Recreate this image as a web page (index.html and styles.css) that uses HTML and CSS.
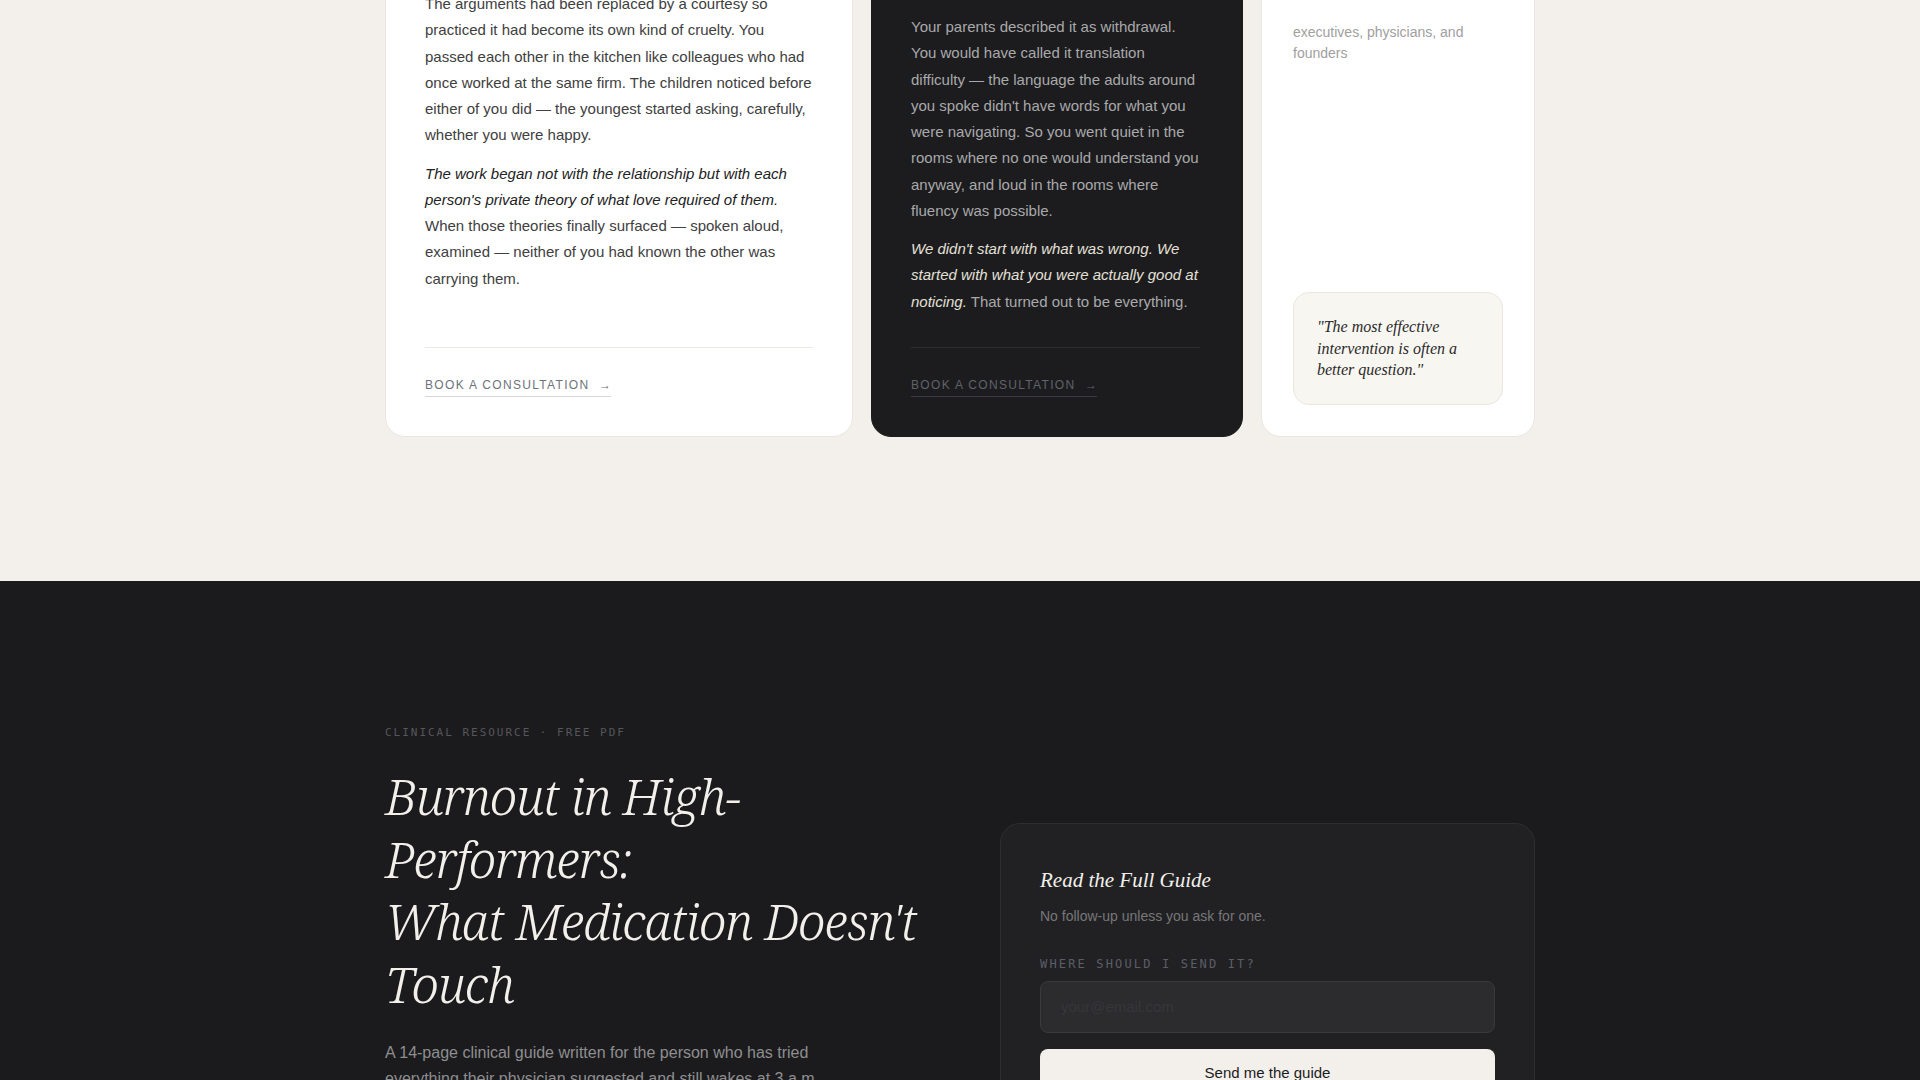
FILE: index.html
```html
<!DOCTYPE html>
<html lang="en">
<head>
<meta charset="utf-8">
<title>Practice — Services and Clinical Guide</title>
<link rel="stylesheet" href="styles.css">
</head>
<body>
<main class="page">
  <section class="services">
    <div class="container">
      <div class="service-grid">
        <article class="card card-a">
          <div class="card-body">
            <p class="card-tag">Couples · 16 sessions</p>
            <h3 class="card-title">The Courteous Marriage</h3>
            <p class="card-text">The arguments had been replaced by a courtesy so practiced it had become its own kind of cruelty. You passed each other in the kitchen like colleagues who had once worked at the same firm. The children noticed before either of you did — the youngest started asking, carefully, whether you were happy.</p>
            <p class="card-text"><em>The work began not with the relationship but with each person's private theory of what love required of them.</em> When those theories finally surfaced — spoken aloud, examined — neither of you had known the other was carrying them.</p>
          </div>
          <div class="card-foot">
            <a class="card-link" href="#consult">Book a consultation <span class="arrow">→</span></a>
          </div>
        </article>

        <article class="card card-b">
          <div class="card-body">
            <p class="card-tag">Individual · Adolescents</p>
            <h3 class="card-title">Fluent Everywhere but at Home</h3>
            <p class="card-text">Your parents described it as withdrawal. You would have called it translation difficulty — the language the adults around you spoke didn't have words for what you were navigating. So you went quiet in the rooms where no one would understand you anyway, and loud in the rooms where fluency was possible.</p>
            <p class="card-text"><em>We didn't start with what was wrong. We started with what you were actually good at noticing.</em> That turned out to be everything.</p>
          </div>
          <div class="card-foot">
            <a class="card-link" href="#consult">Book a consultation <span class="arrow">→</span></a>
          </div>
        </article>

        <article class="card card-c">
          <p class="card-tag">Who I work with</p>
          <h3 class="card-title">A place of belonging</h3>
          <p class="card-sub">executives, physicians, and founders</p>
          <blockquote class="quote">"The most effective intervention is often a better question."</blockquote>
        </article>
      </div>
    </div>
  </section>

  <section class="guide">
    <div class="container guide-grid">
      <div class="guide-copy">
        <p class="eyebrow">Clinical resource · Free PDF</p>
        <h2 class="guide-title">Burnout in High-Performers:<br>What Medication Doesn't Touch</h2>
        <p class="lead">A 14-page clinical guide written for the person who has tried everything their physician suggested and still wakes at 3 a.m.</p>
      </div>

      <form class="guide-form" action="#">
        <h3 class="form-title">Read the Full Guide</h3>
        <p class="form-sub">No follow-up unless you ask for one.</p>
        <label class="form-label" for="email">Where should I send it?</label>
        <input class="form-input" id="email" type="email" placeholder="your@email.com">
        <button class="form-button" type="submit">Send me the guide</button>
        <p class="form-note">Delivered as a PDF. Unsubscribe in one click.</p>
      </form>
    </div>
  </section>
</main>
</body>
</html>
```

FILE: styles.css
```css
html, body {
  margin: 0;
  padding: 0;
}

body {
  background: #f3f0eb;
  font-family: "Liberation Sans", Arial, sans-serif;
  color: #2a2a2a;
}

.container {
  max-width: 1150px;
  margin: 0 auto;
}

/* ---------- Services ---------- */
.services {
  margin-top: -150px;
  padding-bottom: 144px;
}

.service-grid {
  display: grid;
  grid-template-columns: 468fr 372fr 274fr;
  gap: 18px;
}

.card {
  display: flex;
  flex-direction: column;
  background: #ffffff;
  border: 1px solid #ebe7e0;
  border-radius: 20px;
  padding: 39px;
}

.card-b {
  background: #1c1c1e;
  border-color: #1c1c1e;
  padding: 39px 42px 39px 39px;
}

.card-c {
  padding: 31px;
}

.card-body {
  flex: 1 0 auto;
  padding-bottom: 32px;
}

.card-tag {
  margin: 0 0 16px;
  font-family: "DejaVu Sans Mono", "Liberation Mono", monospace;
  font-size: 11px;
  line-height: 16px;
  letter-spacing: 0.18em;
  text-transform: uppercase;
  color: #8a8a8a;
}

.card-title {
  margin: 0;
  font-family: "Liberation Serif", serif;
  font-weight: 400;
  font-size: 28px;
  line-height: 34px;
  color: #1f1f1f;
}

.card-a .card-title { margin-bottom: 35px; }
.card-b .card-title { margin-bottom: 24px; color: #f3f0eb; }
.card-c .card-tag { margin-bottom: 34px; }
.card-c .card-title { margin-bottom: 22px; color: #2a2a2a; }

.card-text {
  margin: 0 0 12px;
  font-size: 15px;
  line-height: 1.75;
  color: #404040;
}

.card-text:last-child {
  margin-bottom: 0;
}

.card-text em {
  font-style: italic;
  color: #222222;
}

.card-b .card-text {
  color: #a9a9ab;
}

.card-b .card-text em {
  color: #e4e0d8;
}

.card-foot {
  border-top: 1px solid #ece9e4;
  padding-top: 27px;
}

.card-b .card-foot {
  border-top-color: #2b2b2e;
}

.card-link {
  display: inline-block;
  padding-bottom: 2px;
  border-bottom: 1px solid #d3d6da;
  font-size: 12px;
  line-height: 18px;
  letter-spacing: 0.11em;
  text-transform: uppercase;
  text-decoration: none;
  color: #6e737b;
}

.card-b .card-link {
  color: #5f636b;
  border-bottom-color: #3a3b3f;
}

.arrow {
  margin-left: 5px;
  letter-spacing: 0;
}

.card-sub {
  margin: 0;
  font-size: 14px;
  line-height: 21px;
  color: #a0a0a0;
}

.quote {
  margin: auto 0 0;
  padding: 23px;
  background: #f8f6f1;
  border: 1px solid #ebe7e0;
  border-radius: 16px;
  font-family: "Liberation Serif", serif;
  font-style: italic;
  font-size: 16px;
  line-height: 1.35;
  color: #2a2a2a;
}

/* ---------- Guide ---------- */
.guide {
  background: #1b1b1d;
  padding: 144px 0 120px;
}

.guide-grid {
  display: grid;
  grid-template-columns: 1fr 1fr;
  gap: 80px;
  align-items: start;
}

.eyebrow {
  margin: 0 0 24px;
  font-family: "DejaVu Sans Mono", "Liberation Mono", monospace;
  font-size: 11px;
  line-height: 16.5px;
  letter-spacing: 0.18em;
  text-transform: uppercase;
  color: #56565b;
}

.guide-title {
  margin: 0 0 25px;
  font-family: "Noto Serif", "Liberation Serif", serif;
  font-style: italic;
  font-weight: 300;
  font-size: 50px;
  line-height: 1.25;
  letter-spacing: -0.02em;
  color: #f3f0eb;
}

.lead {
  margin: 0;
  max-width: 460px;
  font-size: 16px;
  line-height: 1.6;
  color: #8e8e90;
}

.guide-form {
  margin-top: 98px;
  background: #212123;
  border: 1px solid #2e2e31;
  border-radius: 20px;
  padding: 43px 39px 40px;
}

.form-title {
  margin: 0 0 12px;
  font-family: "Liberation Serif", serif;
  font-style: italic;
  font-weight: 400;
  font-size: 21px;
  line-height: 1.3;
  color: #f3f0eb;
}

.form-sub {
  margin: 0 0 29px;
  font-size: 14px;
  line-height: 1.5;
  color: #77777a;
}

.form-label {
  display: block;
  margin-bottom: 8px;
  font-family: "DejaVu Sans Mono", "Liberation Mono", monospace;
  font-size: 12px;
  line-height: 16.8px;
  letter-spacing: 0.18em;
  text-transform: uppercase;
  color: #5b5e67;
}

.form-input {
  display: block;
  box-sizing: border-box;
  width: 100%;
  height: 52px;
  margin: 0;
  padding: 0 20px;
  background: #2c2c2e;
  border: 1px solid #3a3a3d;
  border-radius: 8px;
  font-family: "Liberation Sans", Arial, sans-serif;
  font-size: 15px;
  color: #e8e5df;
  outline: none;
}

.form-input::placeholder {
  color: #363639;
}

.form-button {
  display: block;
  width: 100%;
  height: 48px;
  margin-top: 16px;
  border: 0;
  border-radius: 8px;
  background: #f3f0eb;
  font-family: "Liberation Sans", Arial, sans-serif;
  font-size: 15px;
  color: #1b1b1d;
  cursor: pointer;
}

.form-note {
  margin: 16px 0 0;
  font-size: 12px;
  line-height: 1.5;
  color: #5f5f63;
  text-align: center;
}
```
